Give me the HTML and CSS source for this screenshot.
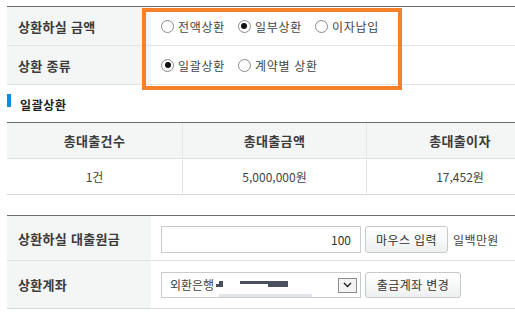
FILE: index.html
```html
<!DOCTYPE html>
<html lang="ko">

<head>
    <meta charset="UTF-8">
    <meta name="viewport" content="width=device-width, initial-scale=1.0">
    <title>상환</title>
    <link rel="stylesheet" href="styles.css">
</head>

<body>
    <div class="wrap">
        <!-- 상환 방식 -->
        <div class="form-box">
            <div class="row">
                <div class="th">상환하실 금액</div>
                <div class="td">
                    <label class="rd"><input type="radio" name="amt">전액상환</label>
                    <label class="rd"><input type="radio" name="amt" checked>일부상환</label>
                    <label class="rd"><input type="radio" name="amt">이자납입</label>
                </div>
            </div>
            <div class="row">
                <div class="th">상환 종류</div>
                <div class="td">
                    <label class="rd"><input type="radio" name="kind" checked>일괄상환</label>
                    <label class="rd"><input type="radio" name="kind">계약별 상환</label>
                </div>
            </div>
            <!-- 강조 표시 -->
            <div class="mark"></div>
        </div>

        <h3 class="tit">일괄상환</h3>

        <!-- 합계 -->
        <div class="sum">
            <div class="sum-row head">
                <div class="c1">총대출건수</div>
                <div class="c2">총대출금액</div>
                <div class="c3">총대출이자</div>
            </div>
            <div class="sum-row">
                <div class="c1">1건</div>
                <div class="c2">5,000,000원</div>
                <div class="c3">17,452원</div>
            </div>
        </div>

        <!-- 입력 -->
        <div class="form-box input-box">
            <div class="row r1">
                <div class="th">상환하실 대출원금</div>
                <div class="td">
                    <input type="text" class="txt" value="100">
                    <a href="javascript:;" class="btn">마우스 입력</a>
                    <span class="won">일백만원</span>
                </div>
            </div>
            <div class="row r2">
                <div class="th">상환계좌</div>
                <div class="td">
                    <div class="sel">
                        <span class="bank">외환은행</span>
                        <span class="hide1"></span>
                        <span class="hide2"></span>
                        <span class="hide3"></span>
                        <span class="hide4"></span>
                        <span class="arrow"><svg width="9" height="6" viewBox="0 0 9 6"><path d="M1 1 L4.5 4.5 L8 1" fill="none" stroke="#222" stroke-width="1.4"/></svg></span>
                    </div>
                    <a href="javascript:;" class="btn">출금계좌 변경</a>
                </div>
            </div>
        </div>
    </div>
</body>

</html>
```

FILE: styles.css
```css
* {
    margin: 0;
    padding: 0;
    box-sizing: border-box;
}

html,
body {
    overflow: hidden;
}

body {
    background: #fff;
    font-family: "Noto Sans CJK KR", "Noto Sans", sans-serif;
    color: #333;
    font-size: 12px;
}

a {
    text-decoration: none;
    color: #333;
}

.wrap {
    width: 515px;
    padding: 6px 0 0 7px;
}

/* 폼 박스 */
.form-box {
    position: relative;
    border-top: 1px solid #6b6e6e;
}

.row {
    display: flex;
    height: 39px;
    border-bottom: 1px solid #e1e4e4;
}

.row .th {
    width: 144px;
    background-color: #f4f5f5;
    padding-left: 11px;
    font-size: 13px;
    font-weight: bold;
    color: #3a3a3a;
    display: flex;
    align-items: center;
    letter-spacing: 0.3px;
}

.row .td {
    flex: 1;
    display: flex;
    align-items: center;
    padding-left: 10px;
}

.rd {
    display: flex;
    align-items: center;
    margin-right: 13px;
    font-size: 12px;
    letter-spacing: 0.7px;
    color: #444;
}

.rd input {
    appearance: none;
    -webkit-appearance: none;
    width: 13px;
    height: 13px;
    border: 1px solid #8a8a8a;
    border-radius: 50%;
    margin-right: 4px;
    background: #fff;
    position: relative;
}

.rd input:checked::after {
    content: "";
    position: absolute;
    left: 2.5px;
    top: 2.5px;
    width: 6px;
    height: 6px;
    border-radius: 50%;
    background: #111;
}

.mark {
    position: absolute;
    left: 135px;
    top: 1px;
    width: 260px;
    height: 82px;
    border: 4px solid #f6812a;
}

/* 소제목 */
.tit {
    height: 37px;
    display: flex;
    align-items: center;
    padding-left: 13px;
    position: relative;
    font-size: 12px;
    font-weight: bold;
    letter-spacing: 0.6px;
    color: #222;
    padding-top: 1px;
}

.tit::before {
    content: "";
    position: absolute;
    left: 0;
    top: 9px;
    width: 4px;
    height: 13px;
    background: #0a8ee0;
}

/* 합계표 */
.sum {
    border-top: 1px solid #6b6e6e;
    margin-bottom: 20px;
}

.sum-row {
    display: flex;
    height: 36px;
    border-bottom: 1px solid #d7dada;
    text-align: center;
}

.sum-row div {
    display: flex;
    align-items: center;
    justify-content: center;
    font-size: 12px;
    color: #444;
}

.sum-row.head {
    background-color: #f4f5f5;
    border-bottom-color: #dde1e1;
}

.sum-row.head div {
    font-size: 13px;
    font-weight: bold;
    color: #3a3a3a;
    letter-spacing: 0.3px;
}

.c1 {
    width: 176px;
    border-right: 1px solid #e3e6e6;
}

.c2 {
    width: 184px;
    border-right: 1px solid #e3e6e6;
}

.c3 {
    flex: 1;
    padding-left: 38px;
}

/* 입력 영역 */
.input-box .r1 {
    height: 45px;
}

.input-box .r2 {
    height: 48px;
    border-bottom-color: #d7dada;
}

.input-box .r1 .td {
    padding-top: 2px;
}

.txt {
    width: 200px;
    height: 27px;
    border: 1px solid #c9cccc;
    text-align: right;
    padding-right: 9px;
    font-family: "Noto Sans CJK KR", sans-serif;
    font-size: 12px;
    color: #333;
    outline: none;
}

.btn {
    display: inline-flex;
    align-items: center;
    justify-content: center;
    height: 27px;
    margin-left: 4px;
    border: 1px solid #c6c9c9;
    border-radius: 3px;
    background: linear-gradient(#fff, #eef0f0);
    font-size: 12px;
    letter-spacing: 0.4px;
    color: #333;
}

.r1 .btn {
    width: 83px;
}

.r2 .btn {
    width: 96px;
    height: 26px;
}

.won {
    margin-left: 5px;
    font-size: 12px;
    letter-spacing: 0.4px;
    color: #444;
}

.sel {
    position: relative;
    width: 200px;
    height: 26px;
    border: 1px solid #c9cccc;
    display: flex;
    align-items: center;
    padding-left: 8px;
}

.bank {
    font-size: 12px;
    color: #444;
}

/* 가려진 계좌번호 */
.hide1,
.hide2,
.hide3,
.hide4 {
    position: absolute;
    background: #4a4f5e;
}

.hide1 {
    left: 57px;
    top: 8px;
    width: 4px;
    height: 6px;
}

.hide1::before {
    content: "";
    position: absolute;
    left: -3px;
    top: 3px;
    width: 3px;
    height: 3px;
    background: #4a4f5e;
}

.hide2 {
    left: 78px;
    top: 8px;
    width: 34px;
    height: 3px;
}

.hide3 {
    left: 106px;
    top: 8px;
    width: 20px;
    height: 6px;
}

.hide4 {
    left: 57px;
    top: 21px;
    width: 93px;
    height: 3px;
    background: #e0e3e8;
}

.arrow {
    position: absolute;
    left: 176px;
    top: 5px;
    width: 19px;
    height: 15px;
    border: 1px solid #8c8c8c;
    background: #f4f4f4;
    display: flex;
    align-items: center;
    justify-content: center;
}
```
